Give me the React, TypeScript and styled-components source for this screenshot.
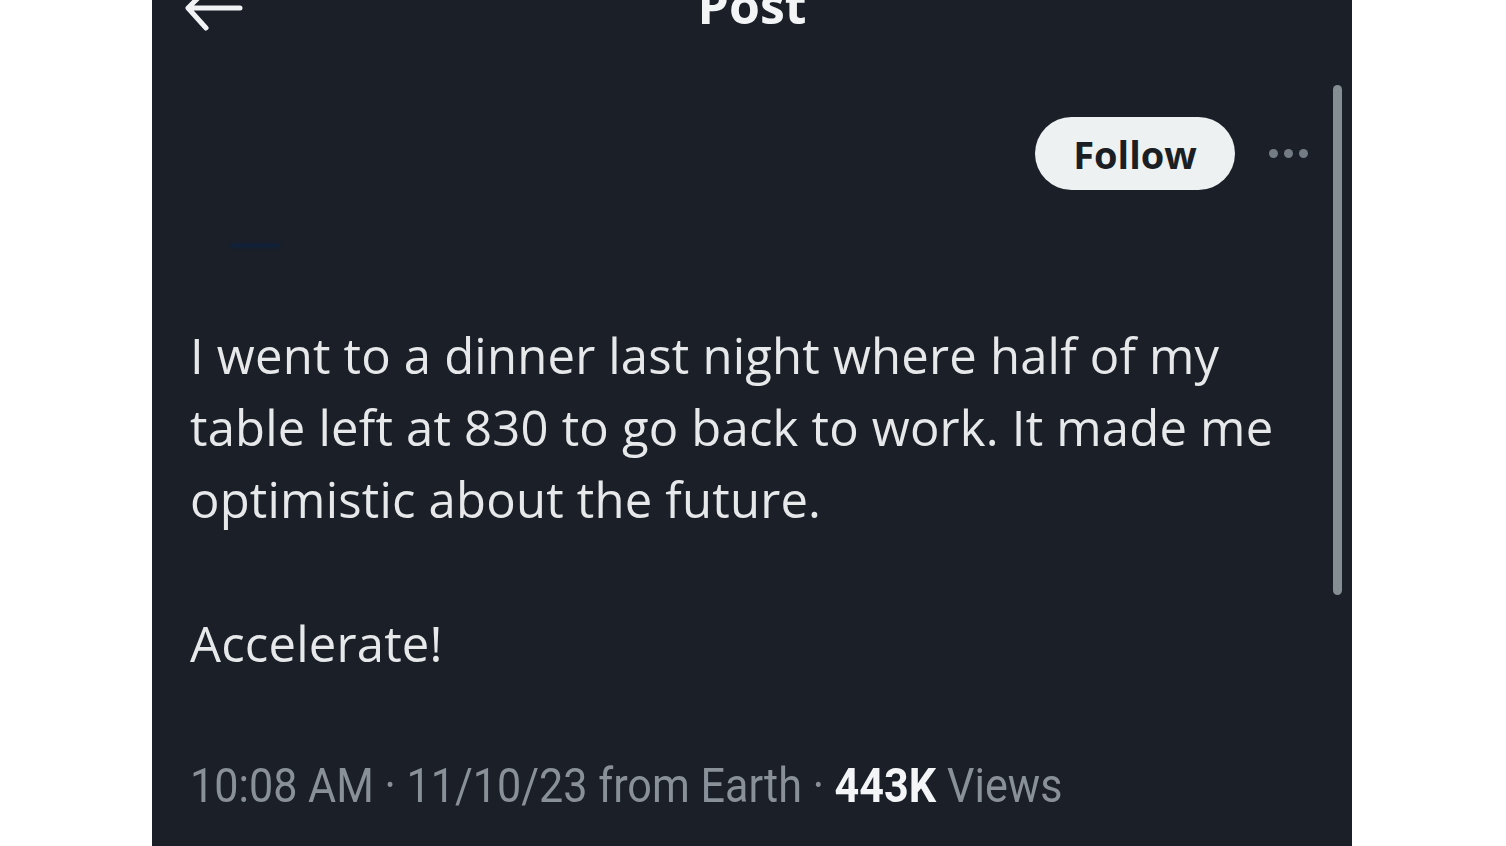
import React from "react";
import styled, { createGlobalStyle } from "styled-components";

const Global = createGlobalStyle`
  html, body { margin: 0; padding: 0; background: #ffffff; }
  body { font-family: "Open Sans", Roboto, Arial, sans-serif; }
`;

const Page = styled.div`
  width: 1506px;
  height: 846px;
  padding-left: 152px;
  box-sizing: border-box;
  display: flex;
  overflow: hidden;
`;

const Panel = styled.div`
  position: relative;
  width: 1200px;
  height: 846px;
  background: #1a1f28;
  display: flex;
  flex-direction: column;
  overflow: hidden;
`;

const Header = styled.div`
  height: 40px;
  margin-top: -8px;
  padding: 0 32px;
  display: flex;
  align-items: flex-start;
  position: relative;
`;

const Title = styled.div`
  position: absolute;
  left: 0;
  right: 0;
  top: -7px;
  text-align: center;
  color: #f2f4f5;
  font-weight: 700;
  font-size: 50px;
  line-height: 40px;
  font-family: "Open Sans", Arial, sans-serif;
`;

const TopRow = styled.div`
  margin-top: 85px;
  padding: 0 44px 0 38px;
  display: flex;
  justify-content: flex-end;
  align-items: center;
  gap: 32px;
`;

const FollowButton = styled.button`
  width: 200px;
  height: 73px;
  margin-right: 2px;
  border: none;
  border-radius: 37px;
  background: #eef1f2;
  color: #1b1f24;
  font-family: "Open Sans", Arial, sans-serif;
  font-weight: 700;
  font-size: 38px;
  padding: 0;
`;

const Dots = styled.div`
  display: flex;
  gap: 6px;
`;

const Dot = styled.span`
  width: 9px;
  height: 9px;
  border-radius: 50%;
  background: #737b84;
`;

const Smudge = styled.div`
  margin: 54px 0 0 78px;
  width: 50px;
  height: 3px;
  border-radius: 2px;
  background: #0b2240;
  filter: blur(1.5px);
`;

const Body = styled.div`
  padding: 0 40px 0 38px;
  margin-top: 72px;
  color: #e6e8ea;
  font-size: 49px;
  letter-spacing: 0.2px;
  line-height: 72px;
  font-family: "Open Sans", Arial, sans-serif;
`;

const Para = styled.p`
  margin: 0;
`;

const Spacer = styled.div`
  height: 72px;
`;

const Footer = styled.div`
  padding: 0 38px;
  margin-top: 78px;
  color: #8a9097;
  font-size: 49px;
  white-space: nowrap;
  transform: scaleX(0.88);
  transform-origin: 38px 0;
  font-family: Roboto, Arial, sans-serif;
`;

const Strong = styled.span`
  color: #f3f5f6;
  font-weight: 700;
`;

const Scrollbar = styled.div`
  position: absolute;
  left: 1181px;
  top: 85px;
  width: 9px;
  height: 510px;
  border-radius: 5px;
  background: #858e92;
`;

const BackArrow = () => (
  <svg width="60" height="40" viewBox="0 0 60 40" fill="none">
    <path d="M56 16H6M20 0L4 16L22 36" stroke="#f0f2f3" strokeWidth="5" strokeLinecap="round" strokeLinejoin="round" />
  </svg>
);

export default function App() {
  return (
    <>
      <Global />
      <Page>
        <Panel>
          <Header>
            <BackArrow />
            <Title>Post</Title>
          </Header>
          <TopRow>
            <FollowButton>Follow</FollowButton>
            <Dots>
              <Dot />
              <Dot />
              <Dot />
            </Dots>
          </TopRow>
          <Smudge />
          <Body>
            <Para>
              I went to a dinner last night where half of my table left at 830 to go back to work. It made me optimistic about the future.
            </Para>
            <Spacer />
            <Para>Accelerate!</Para>
          </Body>
          <Footer>
            10:08 AM · 11/10/23 from Earth · <Strong>443K</Strong> Views
          </Footer>
          <Scrollbar />
        </Panel>
      </Page>
    </>
  );
}
